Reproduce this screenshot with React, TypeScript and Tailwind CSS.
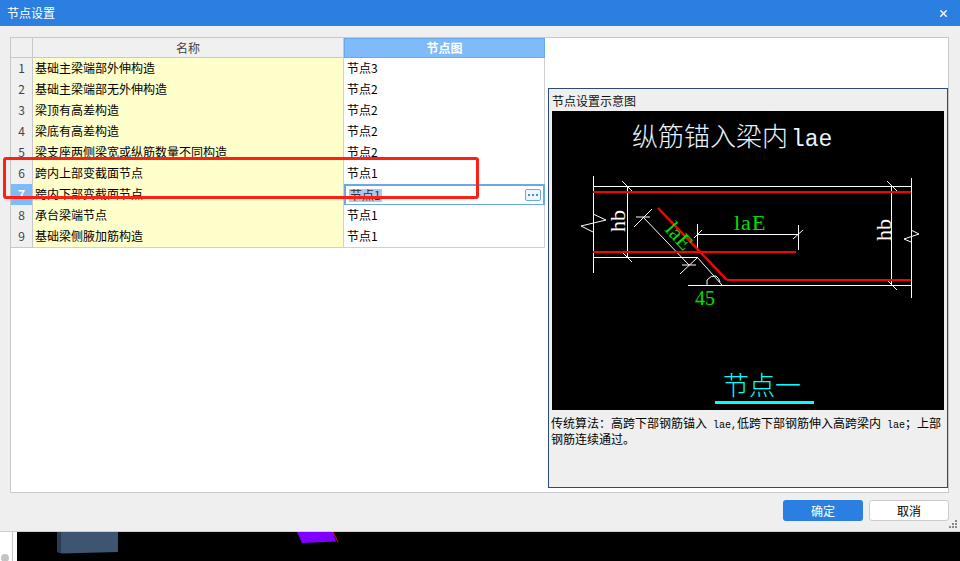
import React from "react";
import { X } from "lucide-react";

const rows = [
  ["基础主梁端部外伸构造", "节点3"],
  ["基础主梁端部无外伸构造", "节点2"],
  ["梁顶有高差构造", "节点2"],
  ["梁底有高差构造", "节点2"],
  ["梁支座两侧梁宽或纵筋数量不同构造", "节点2"],
  ["跨内上部变截面节点", "节点1"],
  ["跨内下部变截面节点", "节点1"],
  ["承台梁端节点", "节点1"],
  ["基础梁侧腋加筋构造", "节点1"],
];

const cjk = '"Noto Sans CJK SC", sans-serif';
const mono = '"Liberation Mono", monospace';

function Diagram() {
  return (
    <svg width="392" height="299" viewBox="552 111 392 299" className="block bg-black" shapeRendering="crispEdges">
      <text x="632" y="146" fill="#e8f4ff" fontSize="26" fontWeight="300" fontFamily={cjk} shapeRendering="auto">
        纵筋锚入梁内<tspan dx="3" fontFamily={mono} fontSize="23">lae</tspan>
      </text>

      <g stroke="#fff" strokeWidth="1" fill="none">
        <path d="M593.5 176V273M627.5 186V258M891.5 186V285M911.5 178V298" />
        <path d="M593 186.5H911M593 257.5H697M688 285.5H911M697 234.5H798M697.5 224V252M798.5 225V250" />
        <g shapeRendering="auto">
          <path d="M622 181L632 191M623 253L632 262M887 181L897 191M887 280L897 290" />
          <path d="M593 214L606 220L581 226L593 232M911 230L919 234L904 239L911 242" />
          <path d="M643 217L689 265M636 217H650M634 227L652 209M682 265H696M680 274L698 257" />
          <path d="M697 257L722 285M707 285V280Q711 275 716 276Q719 278 720 282" />
          <path d="M694 238L702 230M793 239L803 230" />
        </g>
      </g>

      <g stroke="#ff0000" strokeWidth="2" fill="none">
        <path d="M593 192H911M593 252H796M727 280H911" />
        <path d="M658 208L727 280" shapeRendering="auto" strokeWidth="2.5" />
      </g>

      <g fontFamily='"Liberation Serif", serif' fontSize="22" shapeRendering="auto">
        <text x="734" y="230" fill="#00e000" letterSpacing="1">laE</text>
        <text x="695" y="305" fill="#00e000" fontSize="20">45</text>
        <text x="0" y="0" fill="#00e000" transform="translate(664 230) rotate(48)">laE</text>
        <text x="0" y="0" fill="#fff" transform="translate(625 232) rotate(-90)">hb</text>
        <text x="0" y="0" fill="#fff" transform="translate(891 241) rotate(-90)">hb</text>
      </g>

      <text x="723" y="395" fill="#00ffff" fontSize="26" fontWeight="300" fontFamily={cjk} shapeRendering="auto">节点一</text>
      <rect x="715" y="401" width="99" height="3" fill="#00ffff" />
    </svg>
  );
}

function Grid() {
  return (
    <div className="w-[534px] grid grid-cols-[22px_311px_201px] auto-rows-[21px] text-[12px] leading-none text-black">
      <div className="h-[20px] bg-[#f0f0f0] border-r border-b border-[#c8c8c8]" />
      <div className="h-[20px] bg-[#f0f0f0] border-r border-b border-[#c8c8c8] flex items-center justify-center text-[#444]">名称</div>
      <div className="h-[20px] bg-[#7fbbf9] border border-[#6aa8e8] flex items-center justify-center text-white font-bold">节点图</div>
      {rows.map(([name, node], i) => {
        const active = i === 6;
        return (
          <React.Fragment key={name}>
            <div className={active
              ? "-mt-px pb-[1px] bg-[#7fbbf9] border-r border-b border-[#c8c8c8] flex items-center justify-center text-white font-bold"
              : "-mt-px pb-[1px] bg-[#f0f0f0] border-r border-b border-[#c8c8c8] flex items-center justify-center text-[#444]"}>
              {i + 1}
            </div>
            <div className="-mt-px pb-[2px] bg-[#ffffcc] border-r border-b border-[#d0d0d0] flex items-center pl-[2px] whitespace-nowrap">{name}</div>
            {active ? (
              <div className="-mt-px bg-white border-2 border-[#6aa8e8] flex items-center justify-between pl-[3px] pr-[2px]">
                <span className="bg-[#a8c8f0] text-[#333] px-[1px] pb-[1px]">{node}</span>
                <span className="w-[16px] h-[12px] border border-[#6aa8e8] rounded-[2px] bg-[#eef5fd] flex items-center justify-center gap-[2px]">
                  <i className="w-[2px] h-[2px] bg-[#4f8fd8]" />
                  <i className="w-[2px] h-[2px] bg-[#4f8fd8]" />
                  <i className="w-[2px] h-[2px] bg-[#4f8fd8]" />
                </span>
              </div>
            ) : (
              <div className="-mt-px pb-[2px] bg-white border-r border-b border-[#d0d0d0] flex items-center pl-[3px]">{node}</div>
            )}
          </React.Fragment>
        );
      })}
    </div>
  );
}

export default function App() {
  return (
    <div className="relative w-[960px] h-[561px] overflow-hidden bg-white text-[12px]" style={{ fontFamily: cjk }}>
      <div className="h-[532px] bg-[#efefef] border-b border-[#c5cfe0] flex flex-col">
        <div className="h-[26px] bg-[#2b7fe0] text-white flex items-center justify-between pl-[7px] pr-[11px]">
          <span>节点设置</span>
          <X size={11} strokeWidth={3} />
        </div>

        <div className="pl-[10px] pt-[11px]">
          <div className="w-[939px] h-[456px] bg-white border border-[#c8c8c8] flex">
            <Grid />
            <div className="flex-1 pt-[50px] pb-[4px] pl-[3px]">
              <div className="h-full bg-[#efefef] border border-[#2a4a7a] px-[3px]">
                <div className="h-[22px] flex items-center pt-[2px] text-[#111]">节点设置示意图</div>
                <Diagram />
                <p className="-ml-[1px] mt-[5px] leading-[15px] text-black">
                  传统算法：高跨下部钢筋锚入<span className="text-[10px] leading-none whitespace-pre" style={{ fontFamily: mono }}> lae,</span>低跨下部钢筋伸入高跨梁内<span className="text-[10px] leading-none whitespace-pre" style={{ fontFamily: mono }}> lae</span>；上部<br />钢筋连续通过。
                </p>
              </div>
            </div>
          </div>
        </div>

        <div className="flex-1 flex justify-end items-start gap-[6px] pt-[7px] pr-[11px]">
          <button className="w-[80px] h-[21px] rounded-[3px] bg-[#2b7fe0] text-white flex items-center justify-center">确定</button>
          <button className="w-[80px] h-[21px] rounded-[3px] bg-white border border-[#ccc] text-black flex items-center justify-center">取消</button>
        </div>
      </div>

      <div className="h-[29px] flex">
        <div className="w-[12px] relative overflow-hidden">
          <span className="absolute left-[1px] top-[22px] w-[8px] h-[8px] rounded-full bg-[#c4c4c4]" />
        </div>
        <div className="w-[5px] border-l border-[#c8c8c8]" />
        <svg width="943" height="29" viewBox="17 532 943 29" className="block bg-black">
          <path d="M57 532H118V552L62 553.5L57 552Z" fill="#3d5570" />
          <path d="M57 532H61V553L57 552Z" fill="#2a3d52" />
          <path d="M297 532H333L336 541.5L302 543Z" fill="#8000ff" />
          <path d="M333 532L338 542" stroke="#ff0030" strokeWidth="1" />
        </svg>
      </div>

      {/* grip */}
      <div className="absolute left-[949px] top-[520px] grid grid-cols-[2px_2px_2px] auto-rows-[2px] gap-[1px]">
        <i /><i /><i className="bg-[#888]" />
        <i /><i className="bg-[#888]" /><i className="bg-[#888]" />
        <i className="bg-[#888]" /><i className="bg-[#888]" /><i className="bg-[#888]" />
      </div>

      {/* red annotation */}
      <div className="absolute left-[3px] top-[157px] w-[476px] h-[42px] border-[3px] border-[#ff2015] rounded-[3px]" />
    </div>
  );
}
